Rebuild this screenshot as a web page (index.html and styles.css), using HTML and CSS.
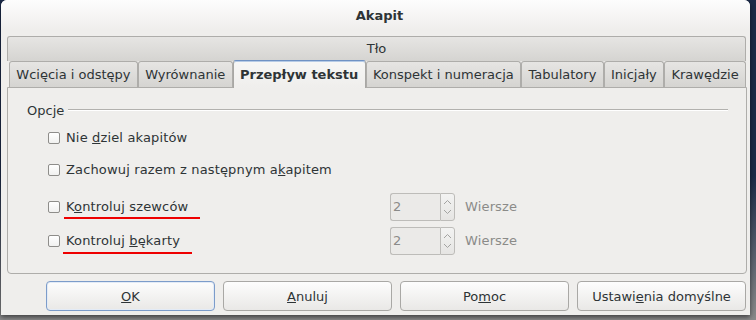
FILE: index.html
```html
<!DOCTYPE html>
<html lang="pl">
<head>
    <meta charset="UTF-8">
    <meta name="viewport" content="width=device-width, initial-scale=1.0">
    <title>Akapit</title>
    <link rel="stylesheet" href="styles.css">
</head>
<body>
    <div class="dialog">
        <div class="titlebar">Akapit</div>

        <div class="notebook">
            <div class="tabrow tabrow-top">
                <div class="tab">Tło</div>
            </div>
            <div class="tabrow tabrow-main">
                <div class="tab">Wcięcia i odstępy</div>
                <div class="tab">Wyrównanie</div>
                <div class="tab active">Przepływ tekstu</div>
                <div class="tab">Konspekt i numeracja</div>
                <div class="tab">Tabulatory</div>
                <div class="tab">Inicjały</div>
                <div class="tab">Krawędzie</div>
            </div>

            <div class="panel">
                <div class="frame-head">
                    <span class="frame-title">Opcje</span>
                    <span class="frame-rule"></span>
                </div>

                <div class="options">
                    <div class="opt opt-1">
                        <span class="check"></span>
                        <span class="label">Nie <u>d</u>ziel akapitów</span>
                    </div>
                    <div class="opt opt-2">
                        <span class="check"></span>
                        <span class="label">Zachowuj razem z następnym a<u>k</u>apitem</span>
                    </div>
                    <div class="opt opt-3">
                        <div class="opt-left">
                            <span class="check"></span>
                            <span class="label marked mark-a">K<u>o</u>ntroluj szewców</span>
                        </div>
                        <div class="spin">
                            <span class="spin-entry">2</span>
                            <span class="spin-arrows">
                                <svg width="9" height="6" viewBox="0 0 9 6"><path d="M1 5 L4.5 1.5 L8 5" fill="none" stroke="#a3a3a1" stroke-width="1"/></svg>
                                <svg width="9" height="6" viewBox="0 0 9 6"><path d="M1 1 L4.5 4.5 L8 1" fill="none" stroke="#a3a3a1" stroke-width="1"/></svg>
                            </span>
                        </div>
                        <span class="unit">Wiersze</span>
                    </div>
                    <div class="opt opt-4">
                        <div class="opt-left">
                            <span class="check"></span>
                            <span class="label marked mark-b">Kontroluj <u>b</u>ękarty</span>
                        </div>
                        <div class="spin">
                            <span class="spin-entry">2</span>
                            <span class="spin-arrows">
                                <svg width="9" height="6" viewBox="0 0 9 6"><path d="M1 5 L4.5 1.5 L8 5" fill="none" stroke="#a3a3a1" stroke-width="1"/></svg>
                                <svg width="9" height="6" viewBox="0 0 9 6"><path d="M1 1 L4.5 4.5 L8 1" fill="none" stroke="#a3a3a1" stroke-width="1"/></svg>
                            </span>
                        </div>
                        <span class="unit">Wiersze</span>
                    </div>
                </div>
            </div>
        </div>

        <div class="buttons">
            <button class="btn default"><u>O</u>K</button>
            <button class="btn"><u>A</u>nuluj</button>
            <button class="btn">Po<u>m</u>oc</button>
            <button class="btn">Ustawi<u>e</u>nia domyślne</button>
        </div>
    </div>
</body>
</html>
```

FILE: styles.css
```css
* {
    box-sizing: border-box;
}
body {
    margin: 0;
    width: 756px;
    height: 320px;
    overflow: hidden;
    background: linear-gradient(#1c2a48 0%, #1c2a48 55%, #8a8a8a 100%);
    font-family: "DejaVu Sans", sans-serif;
    font-size: 13px;
    color: #2e3436;
}
.dialog {
    margin-left: 1px;
    width: 749px;
    height: 315px;
    background: #efeeec;
    border-radius: 6px 6px 0 0;
    box-shadow: 0 2px 5px rgba(0, 0, 0, 0.55);
    display: flex;
    flex-direction: column;
}
.titlebar {
    height: 30px;
    padding-left: 8px;
    border-radius: 6px 6px 0 0;
    background: linear-gradient(#fdfdfd, #efeeec);
    display: flex;
    align-items: center;
    justify-content: center;
    font-weight: bold;
}

/* tabs */
.notebook {
    margin: 6px 3px 0 6px;
}
.tabrow {
    display: flex;
}
.tabrow-top {
    height: 25px;
    margin-right: 1px;
}
.tabrow-main {
    height: 26px;
    margin-left: 2px;
    margin-right: 1px;
}
.tab {
    flex: 1 1 auto;
    padding: 0 6px;
    border: 1px solid #aeadaa;
    border-bottom: none;
    border-radius: 3px 3px 0 0;
    background: linear-gradient(#e6e5e3, #d5d4d1);
    display: flex;
    align-items: center;
    justify-content: center;
    white-space: nowrap;
    line-height: 16px;
}
.tab.active {
    position: relative;
    z-index: 1;
    height: 28px;
    margin-top: -1px;
    margin-bottom: -1px;
    border-color: #a8a7a4;
    border-top: 1px solid #6f92c4;
    background: linear-gradient(#f7f7f6, #efeeec);
    box-shadow: inset 0 1px 0 #b6cbe6;
    font-weight: bold;
}

/* page */
.panel {
    height: 187px;
    padding: 15px 18px 0 19px;
    border: 1px solid #aeadaa;
    border-radius: 0 0 4px 4px;
    background: #efeeec;
}
.frame-head {
    display: flex;
    height: 16px;
    line-height: 16px;
}
.frame-rule {
    flex: 1;
    height: 2px;
    margin: 6px 0 0 4px;
    border-top: 1px solid #b2b1ae;
    border-bottom: 1px solid #ffffff;
}
.options {
    margin-left: 21px;
    display: flex;
    flex-direction: column;
}
.opt {
    display: flex;
    align-items: center;
    height: 20px;
    line-height: 16px;
}
.opt-1 { margin-top: 9px; }
.opt-2 { margin-top: 12px; }
.opt-3 { margin-top: 13px; height: 28px; }
.opt-4 { margin-top: 6px; height: 28px; }
.opt-left {
    width: 342px;
    display: flex;
    align-items: center;
}
.check {
    width: 12px;
    height: 12px;
    border: 1px solid #8e8d8a;
    border-radius: 2px;
    background: linear-gradient(#ffffff, #f1f1f0);
    flex: none;
}
.label {
    margin-left: 6px;
    white-space: nowrap;
    letter-spacing: 0.15px;
}
/* red marks drawn over the two labels */
.marked {
    position: relative;
}
.marked::after {
    content: "";
    position: absolute;
    height: 2px;
    background: #ee0000;
}
.mark-a::after {
    left: -2px;
    width: 136px;
    bottom: -4px;
}
.mark-b::after {
    left: -3px;
    width: 129px;
    bottom: -5px;
}

/* spin button (disabled) */
.spin {
    display: flex;
    width: 65px;
    height: 28px;
}
.spin-entry {
    flex: 1;
    padding-left: 2px;
    border: 1px solid #bdbcb9;
    border-right: none;
    border-radius: 3px 0 0 3px;
    background: #ebeae8;
    color: #8b8b89;
    display: flex;
    align-items: center;
}
.spin-arrows {
    width: 15px;
    border: 1px solid #bdbcb9;
    border-radius: 0 3px 3px 0;
    background: linear-gradient(#f3f3f2, #e6e5e3);
    display: flex;
    flex-direction: column;
    align-items: center;
    justify-content: space-around;
    padding: 3px 0;
}
.unit {
    margin-left: 10px;
    color: #8b8b89;
    letter-spacing: 0.15px;
}

/* buttons */
.buttons {
    display: flex;
    gap: 8px;
    margin: 7px 4px 0 45px;
    height: 30px;
}
.btn {
    flex: 1;
    font: inherit;
    color: #2e3436;
    border: 1px solid #a9a8a5;
    border-radius: 4px;
    background: linear-gradient(#fdfdfd, #e9e8e6);
    padding: 0;
}
.btn.default {
    border-color: #7c9cca;
    box-shadow: inset 0 0 0 1px #e3ebf6;
}
```
